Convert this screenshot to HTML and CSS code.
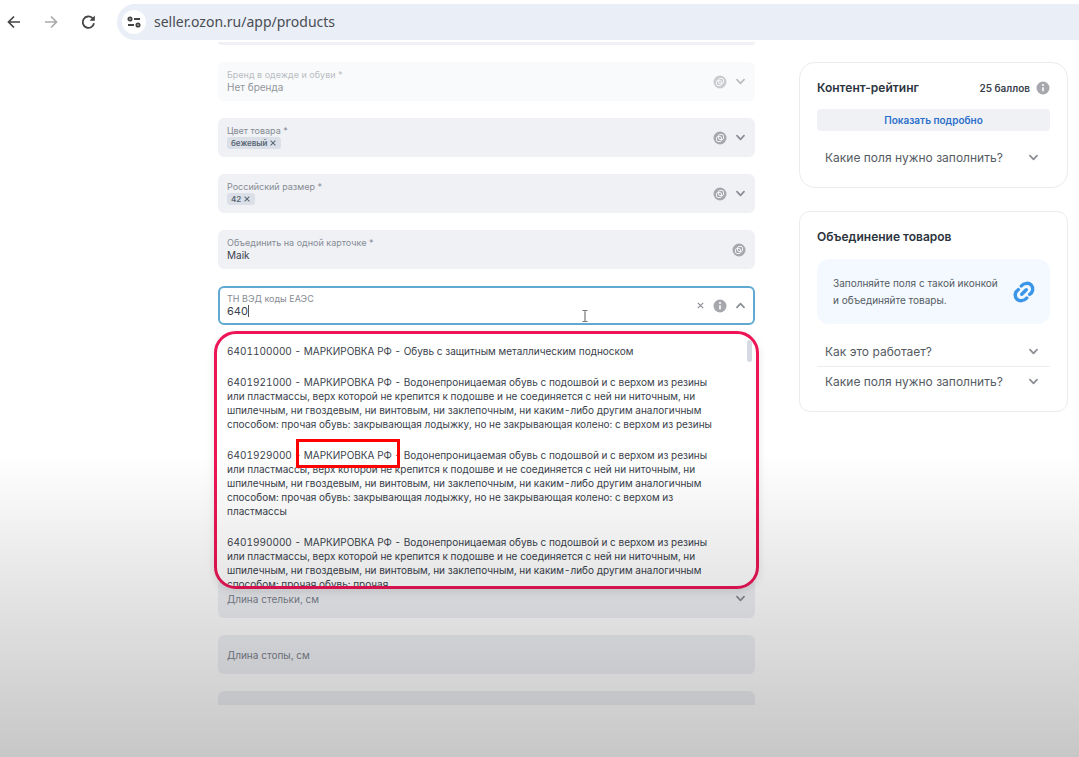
FILE: index.html
```html
<!DOCTYPE html>
<html lang="ru">
<head>
  <meta charset="UTF-8">
  <meta name="viewport" content="width=device-width, initial-scale=1">
  <title>Товары</title>
  <link rel="stylesheet" href="styles.css">
</head>
<body>
  <!-- shared icons -->
  <svg class="sprite" aria-hidden="true">
    <symbol id="chevron" viewBox="0 0 10 10">
      <path d="M1.8 3.4 5 6.6 8.2 3.4" fill="none" stroke="currentColor" stroke-width="1.6" stroke-linecap="round" stroke-linejoin="round"/>
    </symbol>
    <symbol id="cross" viewBox="0 0 10 10">
      <path d="M2 2l6 6M8 2L2 8" fill="none" stroke="currentColor" stroke-width="1.3"/>
    </symbol>
    <symbol id="info" viewBox="0 0 14 14">
      <circle cx="7" cy="7" r="6.5" fill="currentColor"/>
      <path d="M7 6.3v4" stroke="#fff" stroke-width="1.6"/>
      <circle cx="7" cy="4" r="1" fill="#fff"/>
    </symbol>
    <symbol id="merge" viewBox="0 0 14 14">
      <circle cx="7" cy="7" r="6.5" fill="currentColor"/>
      <g fill="none" stroke="#f0f1f5" stroke-width="1">
        <rect x="5.500" y="3.500" width="5" height="5" rx="1.500"/>
        <rect x="3.500" y="5.500" width="5" height="5" rx="1.500"/>
      </g>
    </symbol>
  </svg>

  <header class="toolbar">
    <button class="nav-btn" aria-label="Назад">
      <svg viewBox="0 0 16 16"><path d="M14 8H3M8 2.500 2.500 8 8 13.500" fill="none" stroke="currentColor" stroke-width="1.700"/></svg>
    </button>
    <button class="nav-btn nav-btn-off" aria-label="Вперёд" disabled>
      <svg viewBox="0 0 16 16"><path d="M2 8h11M8 2.500 13.500 8 8 13.500" fill="none" stroke="currentColor" stroke-width="1.700"/></svg>
    </button>
    <button class="nav-btn" aria-label="Обновить">
      <svg viewBox="0 0 16 16"><path d="M14 9.300A5.700 5.700 0 1 1 12.500 4.200L13.500 6" fill="none" stroke="currentColor" stroke-width="1.800"/><path d="M14.800 1.500v5.300H9.500z" fill="currentColor"/></svg>
    </button>
    <div class="omnibox">
      <button class="site-info" aria-label="Сведения о сайте">
        <svg viewBox="0 0 14 12"><g fill="none" stroke="currentColor" stroke-width="1.900"><circle cx="3" cy="3" r="1.600"/><path d="M7 3h6M1 9h6"/><circle cx="11" cy="9" r="1.600"/></g></svg>
      </button>
      <input class="url" type="text" value="seller.ozon.ru/app/products" aria-label="Адрес">
    </div>
  </header>

  <main class="page">
    <form class="form">
      <div class="field field-top"></div>

      <div class="field field-off">
        <div class="field-body">
          <label for="brand">Бренд в одежде и обуви *</label>
          <input id="brand" type="text" value="Нет бренда" disabled>
        </div>
        <svg class="icon"><use href="#merge"/></svg>
        <svg class="chevron"><use href="#chevron"/></svg>
      </div>

      <div class="field">
        <div class="field-body">
          <label for="color">Цвет товара *</label>
          <div class="chips">
            <button type="button" class="chip">бежевый <svg><use href="#cross"/></svg></button>
            <input id="color" type="text">
          </div>
        </div>
        <svg class="icon"><use href="#merge"/></svg>
        <svg class="chevron"><use href="#chevron"/></svg>
      </div>

      <div class="field">
        <div class="field-body">
          <label for="size">Российский размер *</label>
          <div class="chips">
            <button type="button" class="chip">42 <svg><use href="#cross"/></svg></button>
            <input id="size" type="text">
          </div>
        </div>
        <svg class="icon"><use href="#merge"/></svg>
        <svg class="chevron"><use href="#chevron"/></svg>
      </div>

      <div class="field">
        <div class="field-body">
          <label for="card">Объединить на одной карточке *</label>
          <input id="card" type="text" value="Maik">
        </div>
        <svg class="icon"><use href="#merge"/></svg>
      </div>

      <div class="combo">
        <div class="field field-active">
          <div class="field-body">
            <label for="tnved">ТН ВЭД коды ЕАЭС</label>
            <div class="typed"><input id="tnved" type="text" value="640" size="3"><span class="caret"></span></div>
          </div>
          <svg class="mouse" viewBox="0 0 8 14"><path d="M1.500 1.500h2L4 2l.5-.5h2M1.500 12.500h2L4 12l.5.5h2M4 2v10" fill="none" stroke="#777" stroke-width="1.200"/></svg>
          <button type="button" class="clear" aria-label="Очистить"><svg><use href="#cross"/></svg></button>
          <svg class="icon"><use href="#info"/></svg>
          <svg class="chevron chevron-up"><use href="#chevron"/></svg>
        </div>
        <div class="dropdown">
          <ul class="options">
            <li>6401100000 - МАРКИРОВКА РФ - Обувь с защитным металлическим подноском</li>
            <li>6401921000 - МАРКИРОВКА РФ - Водонепроницаемая обувь с подошвой и с верхом из резины или пластмассы, верх которой не крепится к подошве и не соединяется с ней ни ниточным, ни шпилечным, ни гвоздевым, ни винтовым, ни заклепочным, ни каким-либо другим аналогичным способом: прочая обувь: закрывающая лодыжку, но не закрывающая колено: с верхом из резины</li>
            <li>6401929000 - <span class="mark">МАРКИРОВКА РФ</span> - Водонепроницаемая обувь с подошвой и с верхом из резины или пластмассы, верх которой не крепится к подошве и не соединяется с ней ни ниточным, ни шпилечным, ни гвоздевым, ни винтовым, ни заклепочным, ни каким-либо другим аналогичным способом: прочая обувь: закрывающая лодыжку, но не закрывающая колено: с верхом из пластмассы</li>
            <li>6401990000 - МАРКИРОВКА РФ - Водонепроницаемая обувь с подошвой и с верхом из резины или пластмассы, верх которой не крепится к подошве и не соединяется с ней ни ниточным, ни шпилечным, ни гвоздевым, ни винтовым, ни заклепочным, ни каким-либо другим аналогичным способом: прочая обувь: прочая</li>
          </ul>
          <div class="thumb"></div>
        </div>
      </div>

      <div class="field field-empty">
        <input type="text" placeholder="Длина стельки, см" aria-label="Длина стельки, см">
        <svg class="chevron"><use href="#chevron"/></svg>
      </div>
      <div class="field field-empty">
        <input type="text" placeholder="Длина стопы, см" aria-label="Длина стопы, см">
      </div>
      <div class="field"></div>
    </form>

    <aside class="sidebar">
      <section class="card">
        <div class="card-head">
          <h2>Контент-рейтинг</h2>
          <span class="score">25 баллов</span>
          <svg class="icon"><use href="#info"/></svg>
        </div>
        <button class="details">Показать подробно</button>
        <button class="row">Какие поля нужно заполнить? <svg class="chevron"><use href="#chevron"/></svg></button>
      </section>

      <section class="card card-merge">
        <div class="card-head">
          <h2>Объединение товаров</h2>
        </div>
        <div class="hint">
          <p>Заполняйте поля с такой иконкой<br>и объединяйте товары.</p>
          <svg class="link-icon" viewBox="0 0 24 24">
            <g fill="none" stroke="#3b96ea" stroke-width="3.700" stroke-linecap="round">
              <path d="M9 5.500C12 1.800 17.400 1.600 20 4.600c2.700 3.200 1.800 7.600-1.800 10"/>
              <path d="M15 18.500C12 22.200 6.600 22.400 4 19.400c-2.700-3.200-1.800-7.600 1.800-10"/>
              <path d="M9.500 14.500l5-5"/>
            </g>
          </svg>
        </div>
        <button class="row">Как это работает? <svg class="chevron"><use href="#chevron"/></svg></button>
        <button class="row">Какие поля нужно заполнить? <svg class="chevron"><use href="#chevron"/></svg></button>
      </section>
    </aside>
  </main>
</body>
</html>
```
FILE: styles.css
```css
* {
  box-sizing: border-box;
}

body {
  margin: 0;
  height: 100vh;
  display: flex;
  flex-direction: column;
  overflow: hidden;
  background: #fff;
  color: #3a424c;
  font-family: Inter, "Noto Sans", sans-serif;
  font-size: 10px;
}

/* shade over the lower part of the page */
body::after {
  content: "";
  position: fixed;
  inset: 60% 0 0 0;
  background: linear-gradient(rgba(0, 0, 0, 0), rgba(0, 0, 0, 0.11) 48%, rgba(0, 0, 0, 0.22));
  pointer-events: none;
  z-index: 5;
}

button,
input {
  margin: 0;
  padding: 0;
  border: 0;
  background: none;
  color: inherit;
  font: inherit;
  outline: none;
}

.sprite {
  display: none;
}

/* browser toolbar */
.toolbar {
  display: flex;
  align-items: center;
  flex: none;
  height: 42px;
  padding: 2px 0 0 6px;
}

.nav-btn {
  width: 16px;
  height: 16px;
  margin-right: 21px;
  color: #444;
}

.nav-btn svg {
  display: block;
  width: 16px;
  height: 16px;
}

.nav-btn-off {
  color: #aaa;
}

.omnibox {
  flex: 1;
  display: flex;
  align-items: center;
  gap: 8px;
  height: 36px;
  padding-left: 5px;
  border-radius: 18px 0 0 18px;
  background: #e9eef7;
}

.site-info {
  display: flex;
  align-items: center;
  justify-content: center;
  width: 24px;
  height: 24px;
  border-radius: 50%;
  background: #fff;
  color: #444;
}

.site-info svg {
  width: 14px;
  height: 12px;
}

.url {
  flex: 1;
  padding-bottom: 2px;
  color: #4a4c52;
  font-family: "Noto Sans", sans-serif;
  font-size: 14px;
}

/* page */
.page {
  flex: 1;
  min-height: 0;
  display: grid;
  grid-template-columns: 1fr 269px;
  gap: 44px;
  margin-bottom: 52px;
  padding: 0 11px 0 218px;
  overflow: hidden;
}

.form {
  display: flex;
  flex-direction: column;
  gap: 17px;
}

.field {
  flex: none;
  display: flex;
  align-items: center;
  gap: 8px;
  height: 39px;
  padding: 0 9px;
  border-radius: 6px;
  background: #f0f1f5;
}

.field-top {
  height: 3px;
  border-radius: 0 0 6px 6px;
}

.field-off {
  background: #f9fafb;
}

.field-off > * {
  opacity: 0.55;
}

.field-body {
  flex: 1;
  display: flex;
  flex-direction: column;
  padding-bottom: 2px;
}

.field label {
  color: #858b94;
  font-size: 9px;
  line-height: 12px;
}

.field-body input {
  height: 12px;
  line-height: 12px;
}

.chips {
  display: flex;
  gap: 4px;
}

.chips input {
  flex: 1;
}

.chip {
  display: flex;
  align-items: center;
  gap: 2px;
  height: 12px;
  padding: 0 4px;
  border-radius: 3px;
  background: #dbe0e8;
  color: #5a6674;
  font-size: 8px;
  font-weight: 600;
}

.chip svg {
  width: 8px;
  height: 8px;
}

.icon {
  flex: none;
  width: 14px;
  height: 14px;
  color: #a6a8ad;
}

.chevron {
  flex: none;
  width: 11px;
  height: 11px;
  color: #8a8d93;
}

.chevron-up {
  transform: rotate(180deg);
}

.combo {
  position: relative;
  margin-bottom: 237px;
}

.field-active {
  padding: 0 7px;
  border: 2px solid #5fa9d3;
  background: #fff;
}

.typed {
  display: flex;
}

.typed input {
  width: 21px;
  font-size: 11px;
}

.caret {
  width: 1px;
  height: 12px;
  background: #555;
}

.mouse {
  align-self: flex-end;
  width: 8px;
  height: 14px;
  margin-right: 99px;
}

.clear {
  width: 9px;
  height: 9px;
  color: #8a8d93;
}

.clear svg {
  display: block;
  width: 9px;
  height: 9px;
}

.dropdown {
  position: absolute;
  top: 45px;
  left: -4px;
  right: -4px;
  display: flex;
  gap: 24px;
  height: 258px;
  padding: 0 4px 0 10px;
  border: 3px solid #ed1556;
  border-radius: 22px;
  background: #fff;
  box-shadow: 0 3px 8px rgba(0, 0, 0, 0.1);
  overflow: hidden;
}

.options {
  flex: 1;
  margin: 0;
  padding: 2px 0 0;
  list-style: none;
  line-height: 14px;
  font-variant-numeric: tabular-nums;
}

.options li {
  padding: 8px 0 9px;
}

.mark {
  position: relative;
}

.mark::after {
  content: "";
  position: absolute;
  inset: -10px -8px -7px;
  border: 3px solid #f00;
  z-index: 6;
}

.thumb {
  width: 5px;
  height: 22px;
  margin-top: 6px;
  border-radius: 3px;
  background: #d5dae2;
}

.field-empty input {
  flex: 1;
}

.field-empty input::placeholder {
  color: #7b828c;
}

/* right column */
.sidebar {
  display: flex;
  flex-direction: column;
  gap: 23px;
  padding-top: 20px;
}

.card {
  padding: 16px 17px 15px;
  border: 1px solid #ebecee;
  border-radius: 16px;
}

.card-merge {
  border-radius: 11px;
}

.card-head {
  display: flex;
  align-items: center;
  gap: 6px;
  height: 18px;
}

.card h2 {
  flex: 1;
  margin: 0;
  padding-bottom: 2px;
  color: #2c343e;
  font-size: 12px;
  font-weight: 600;
}

.score {
  font-weight: 600;
}

.details {
  display: block;
  width: 100%;
  height: 22px;
  margin: 12px 0 11px;
  border-radius: 4px;
  background: #f0f1f5;
  color: #2c6fcb;
  font-weight: 600;
}

.row {
  display: flex;
  align-items: center;
  justify-content: space-between;
  width: 100%;
  height: 30px;
  padding: 0 11px 0 8px;
  color: #555b63;
  font-size: 12px;
  text-align: left;
}

.row + .row {
  border-top: 1px solid #ecedf0;
}

.hint {
  display: flex;
  align-items: center;
  gap: 4px;
  height: 65px;
  margin: 13px 0 12px;
  padding: 0 15px 0 16px;
  border-radius: 12px;
  background: #f3f9fe;
}

.hint p {
  flex: 1;
  margin: 0;
  color: #555b63;
  line-height: 17px;
}

.link-icon {
  flex: none;
  width: 22px;
  height: 22px;
}
```
